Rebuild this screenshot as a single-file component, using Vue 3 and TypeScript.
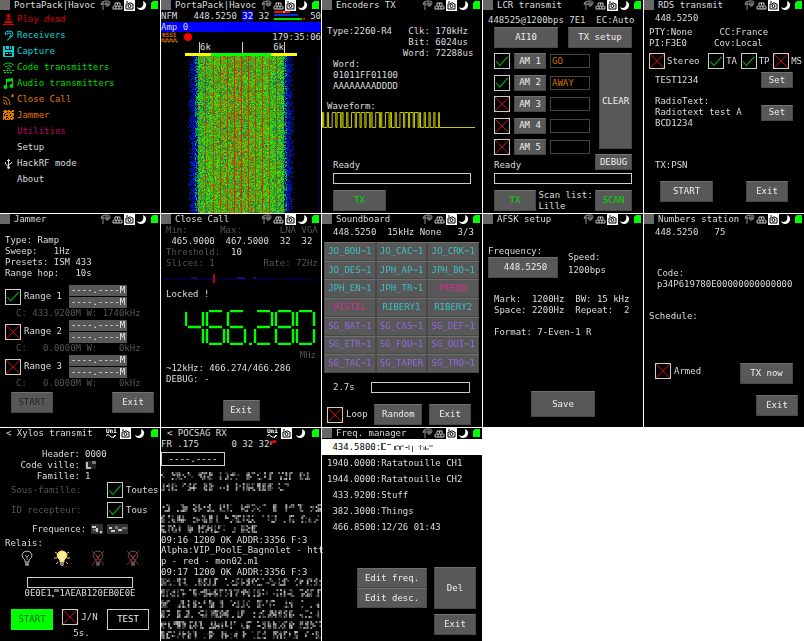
<script setup lang="ts">
import { onMounted, ref } from 'vue'

interface Screen {
  id: string
  title: string
  back?: boolean
}

interface MenuItem {
  label: string
  color: string
  icon: string
}

interface Block {
  x: number
  y: number
  fill: string
}

const screens: Screen[] = [
  { id: 'menu', title: 'PortaPack|Havoc' },
  { id: 'receiver', title: 'PortaPack|Havoc' },
  { id: 'encoders', title: 'Encoders TX' },
  { id: 'lcr', title: 'LCR transmit' },
  { id: 'rds', title: 'RDS transmit' },
  { id: 'jammer', title: 'Jammer' },
  { id: 'closecall', title: 'Close Call' },
  { id: 'soundboard', title: 'Soundboard' },
  { id: 'afsk', title: 'AFSK setup' },
  { id: 'numbers', title: 'Numbers station' },
  { id: 'xylos', title: 'Xylos transmit', back: true },
  { id: 'pocsag', title: 'POCSAG RX', back: true },
  { id: 'freqman', title: 'Freq. manager' },
]

const menu: MenuItem[] = [
  { label: 'Play dead', color: 'red', icon: 'joystick' },
  { label: 'Receivers', color: 'cyan', icon: 'ear' },
  { label: 'Capture', color: 'cyan', icon: 'floppy' },
  { label: 'Code transmitters', color: 'green', icon: 'remote' },
  { label: 'Audio transmitters', color: 'green', icon: 'note' },
  { label: 'Close Call', color: 'orange', icon: 'dish' },
  { label: 'Jammer', color: 'orange', icon: 'noise' },
  { label: 'Utilities', color: 'magenta', icon: '' },
  { label: 'Setup', color: 'white', icon: '' },
  { label: 'HackRF mode', color: 'white', icon: 'usb' },
  { label: 'About', color: 'white', icon: '' },
]

const messages = [
  { on: true, text: 'GO' },
  { on: true, text: 'AWAY' },
  { on: false, text: '' },
  { on: false, text: '' },
  { on: false, text: '' },
]

const flags = [
  { name: 'Stereo', on: false },
  { name: 'TA', on: true },
  { name: 'TP', on: true },
  { name: 'MS', on: false },
]

const ranges = [
  { on: true, info: 'C: 433.9200M W: 1740kHz' },
  { on: false, info: 'C:   0.0000M W:    0kHz' },
  { on: false, info: 'C:   0.0000M W:    0kHz' },
]

const sounds: [string, string][] = [
  ['JO_BOU~1', 'teal'], ['JO_CAC~1', 'teal'], ['JO_CRK~1', 'teal'],
  ['JO_DES~1', 'teal'], ['JPH_AP~1', 'teal'], ['JPH_BO~1', 'teal'],
  ['JPH_EN~1', 'teal'], ['JPH_TR~1', 'teal'], ['PERDU', 'pink'],
  ['PISTIL', 'pink'], ['RIBERY1', 'teal'], ['RIBERY2', 'teal'],
  ['SG_BAT~1', 'violet'], ['SG_CAS~1', 'violet'], ['SG_DEF~1', 'violet'],
  ['SG_ETR~1', 'violet'], ['SG_FOU~1', 'violet'], ['SG_OUI~1', 'violet'],
  ['SG_TAC~1', 'violet'], ['SG_TAPER', 'violet'], ['SG_TRO~1', 'violet'],
]

const relays = ['off', 'on', 'none', 'none']

const frequencies = [
  '1940.0000:Ratatouille CH1',
  '1944.0000:Ratatouille CH2',
  ' 433.9200:Stuff',
  ' 382.3000:Things',
  ' 466.8500:12/26 01:43',
]

function random(seed: number) {
  let s = seed
  return () => {
    s = (s * 1664525 + 1013904223) >>> 0
    return s / 4294967296
  }
}

/* Redacted text: each # of the mask becomes a cell of grey blocks. */
function mosaic(mask: string, seed: number): Block[] {
  const rnd = random(seed)
  const out: Block[] = []
  for (let c = 0; c < mask.length; c++) {
    if (mask[c] === ' ') continue
    for (let i = 0; i < 3; i++) {
      const tall = rnd() > 0.6
      for (let j = 0; j < 4; j++) {
        if (!tall && rnd() > 0.32) continue
        if (i === 2 && tall) continue
        const v = Math.round(40 + rnd() * 150)
        out.push({ x: c * 6 + i * 2, y: 1 + j * 2, fill: `rgb(${v},${v},${v})` })
      }
    }
  }
  return out
}

const log: { text?: string; mask?: string }[] = [
  { mask: '###### ### #### ##### ### ##' },
  { mask: '### ### ## ## ####### ##' },
  { mask: '' },
  { mask: '## ## #### ### ##### # #### ##' },
  { mask: '##### ##### ###### ### ## ####' },
  { mask: '#### # ##### # ###' },
  { text: '09:16 1200 OK ADDR:3356 F:3' },
  { text: 'Alpha:VIP_PoolE_Bagnolet - htt' },
  { text: 'p - red - mon02.m1' },
  { text: '09:17 1200 OK ADDR:3356 F:3' },
  { mask: '##### ##### ############ #####' },
  { mask: '#################### #### ####' },
  { mask: '## ####### # #### #### ## # ##' },
  { mask: '## ### ######### ######## ####' },
  { mask: '######## ##### ## ####### ####' },
  { mask: '####### ## ##### ### ##### ###' },
]

/* PT2260 symbols, eight time units each, then a sync pulse. */
function waveform(code: string): string {
  const symbols: Record<string, string> = { '0': '10001000', '1': '11101110', F: '10001110' }
  const bits = code.split('').map((c) => symbols[c]).join('') + '1'
  const u = 1.21
  let level = 0
  let d = 'M0 15.5'
  bits.split('').forEach((b, i) => {
    const v = Number(b)
    if (v !== level) {
      d += `H${(i * u + 0.5).toFixed(2)}V${v ? 0.5 : 15.5}`
      level = v
    }
  })
  return d + `H${(bits.length * u).toFixed(2)}V15.5H153`
}
const wave = waveform('01011FF01100')

const segmentsOf: Record<string, string> = { '4': 'bcfg', '6': 'acdefg', '2': 'abdeg', '8': 'abcdefg', '0': 'abcdef' }
const segmentPath: Record<string, string> = {
  a: 'M3 1H16', b: 'M18 2V16', c: 'M18 19V33', d: 'M3 34H16', e: 'M1 19V33', f: 'M1 2V16', g: 'M3 17H16',
}
const reading = '466280'.split('').map((ch, i) => ({
  x: i * 21 + (i > 2 ? 6 : 0),
  d: segmentsOf[ch].split('').map((s) => segmentPath[s]).join(' '),
}))

const noise = (() => {
  const rnd = random(7)
  const out: Block[] = []
  for (let y = 0; y < 10; y++) for (let x = 0; x < 11; x++) if (rnd() > 0.25) out.push({ x, y, fill: '' })
  return out
})()

const waterfall = ref<HTMLCanvasElement[]>([])

onMounted(() => {
  const canvas = waterfall.value[0]
  const ctx = canvas?.getContext('2d')
  if (!canvas || !ctx) return
  const w = canvas.width
  const h = canvas.height
  const img = ctx.createImageData(w, h)
  const rnd = random(42)
  const strong = [73, 80, 87, 101]
  const weak = [44, 52, 59, 66, 94, 108, 115]
  for (let y = 0; y < h; y++) {
    for (let x = 0; x < w; x++) {
      const n = rnd()
      const m = rnd()
      let c = [0, 0, 0]
      const d = x < 80 ? x - 28 : 131 - x
      if (d >= -2 && d < 9) {
        if (n < (d + 2) / 7) c = [0, m * 30, 90 + m * 160]
        if (d > 5 && m > 0.55) c = [0, 130 + n * 80, 60]
      } else if (d >= 9) {
        const heat = 0.14 + 0.36 * Math.max(0, 1 - Math.abs(x - 74) / 42)
        if (n < heat) c = [130 + m * 50, 90 + m * 50, 10]
        else if (n > (d < 20 ? 0.75 : 0.9)) c = [0, 110 + m * 60, 80 + m * 60]
        else c = [30 + m * 50, 175 + m * 60, 10]
        if (strong.includes(x) && m > 0.1) c = [225, 35, 10]
        else if (weak.includes(x) && m > 0.3) c = [170, 65, 10]
      } else if (x === 158) c = [0, 0, 70]
      const i = (y * w + x) * 4
      img.data[i] = c[0]
      img.data[i + 1] = c[1]
      img.data[i + 2] = c[2]
      img.data[i + 3] = 255
    }
  }
  ctx.putImageData(img, 0, 0)
})
</script>

<template>
  <main class="gallery">
    <section v-for="s in screens" :key="s.id" class="screen" :class="s.id">
      <header class="bar" :class="{ wide: s.back }">
        <span v-if="!s.back" class="square"></span>
        <h2>{{ s.back ? '< ' : '' }}{{ s.title }}</h2>
        <svg v-if="s.back" class="ico" viewBox="0 0 11 11">
          <text x="0" y="5" class="tiny">Uni</text>
          <path d="M0 8q2-3 4 0t5-1M7 10l3-3" fill="none" stroke="#fff" />
        </svg>
        <template v-else>
          <svg class="ico" viewBox="0 0 11 11">
            <path d="M1 5q0-4 4-4h3q2 0 2 2t-2 3H6M3 2v8M6 1v5M8 2v4M1 4h8" fill="none" stroke="#8c8c8c" />
          </svg>
          <svg class="ico" viewBox="0 0 11 11">
            <path d="M3 5V3h5v2M5.5 3v2M1 9V7q0-1 1-1h7q1 0 1 1v2zM4 6v3M7 6v3" fill="none" stroke="#ccc" />
          </svg>
        </template>
        <svg class="ico" viewBox="0 0 11 11">
          <path d="M0 0h11v11H0z" fill="#fff" />
          <path d="M2 4h2l1-1h2l1 1h1v5H2zM2 2h2" fill="none" stroke="#000" />
          <circle cx="5.500" cy="6" r="1.500" fill="none" stroke="#000" />
        </svg>
        <svg class="ico" viewBox="0 0 11 11">
          <path d="M7 1q4 2 3 5-1 4-5 4-3 0-4-3 3 2 5 0t1-6z" fill="#fff" />
        </svg>
        <svg class="ico" viewBox="0 0 11 11">
          <path d="M5 1h5v8H3V3z" fill="#0f0" />
        </svg>
      </header>

      <nav v-if="s.id === 'menu'" class="menu-list">
        <a v-for="m in menu" :key="m.label" href="#" :class="m.color">
          <svg viewBox="0 0 11 11">
            <g v-if="m.icon === 'joystick'" fill="currentColor">
              <circle cx="5.500" cy="2" r="2" /><path d="M5 3h1v3H5zM3 5h5v1H3zM2 7h7l1 2H1zM0 10h11v1H0z" />
            </g>
            <path v-else-if="m.icon === 'ear'" d="M2 5q0-4 4-4t4 3q0 2-2 3t-2 2-2 1M4 5q0-2 2-2t2 2-2 2" fill="none" stroke="currentColor" />
            <path v-else-if="m.icon === 'floppy'" d="M0 0h2v4h7V0h2v11H0zM3 0h3v3H3zM7 0h1v3H7zM2 6v4h7V6zM3 7h2v1H3zM6 7h2v1H6z" fill="currentColor" fill-rule="evenodd" />
            <g v-else-if="m.icon === 'remote'" fill="none" stroke="currentColor">
              <path d="M0 3q5-4 11 0M2 5q4-3 7 0M4 7q2-2 3 0" /><path d="M0 8.500h11M1 10.500h9" stroke-dasharray="2 1" />
            </g>
            <g v-else-if="m.icon === 'note'" fill="currentColor">
              <path d="M3 1l7-1v8H9V3L4 4v5H3z" /><circle cx="2.500" cy="9" r="2" /><circle cx="8.500" cy="8" r="2" />
            </g>
            <g v-else-if="m.icon === 'dish'" fill="none" stroke="currentColor">
              <path d="M0 3q7 0 7 8M0 6q4 0 4 5M0 8.500q2 0 2 2" /><path d="M8 2h3M9.500 0v3" />
            </g>
            <g v-else-if="m.icon === 'noise'" fill="currentColor">
              <rect v-for="(b, i) in noise" :key="i" :x="b.x" :y="b.y" width="1" height="1" />
            </g>
            <g v-else-if="m.icon === 'usb'" fill="none" stroke="currentColor">
              <path d="M5.500 1v8M2.500 4v2l3 2M8.500 4v1l-3 2M4 2.500h3" /><circle cx="5.500" cy="9.500" r="1" fill="currentColor" />
            </g>
          </svg>
          <span>{{ m.label }}</span>
        </a>
      </nav>

      <template v-else-if="s.id === 'receiver'">
        <div class="row tune">
          <pre>NFM   448.5250 <mark>32</mark> 32</pre>
          <svg class="meter" viewBox="0 0 32 10">
            <path d="M0 1h16" stroke="#f00" stroke-width="2" /><path d="M10 0v2" stroke="#fff" />
            <path d="M0 4h24" stroke="#03d" stroke-width="2" />
            <path d="M0 8h28" stroke="#0d0" stroke-width="2" /><path d="M29 8h2" stroke="#f00" stroke-width="2" />
          </svg>
          <p>50</p>
        </div>
        <p class="amp">Amp 0</p>
        <div class="row rec">
          <svg class="rssi" viewBox="0 0 18 11">
            <text x="1" y="5">RSSI</text>
            <path d="M1 10V7h2v3h2V7h2v3h2V7h2v3h2V7h2v3h2" fill="none" stroke="#d87000" />
          </svg>
          <span class="dot"></span>
          <p>179:35:06</p>
        </div>
        <div class="scale"><span>6k</span><span class="mid"></span><span>6k</span></div>
        <div class="band"></div>
        <canvas ref="waterfall" class="fall" width="160" height="157"></canvas>
      </template>

      <template v-else-if="s.id === 'encoders'">
        <pre class="one">Type:2260-R4   Clk: 170kHz
               Bit: 6024us
              Word: 72288us</pre>
        <pre class="two">Word:
01011FF01100
AAAAAAAADDDD</pre>
        <p class="one wave-label">Waveform:</p>
        <svg class="wave" viewBox="0 0 160 16"><path :d="wave" fill="none" stroke="#c8c800" /></svg>
        <p class="two ready">Ready</p>
        <progress class="gauge" value="0" max="1" aria-label="Transmission"></progress>
        <div class="row foot"><button class="w52 go">TX</button></div>
      </template>

      <template v-else-if="s.id === 'lcr'">
        <pre class="one">448525@1200bps 7E1  EC:Auto</pre>
        <div class="row top"><button class="w64">AI10</button><button class="w64">TX setup</button></div>
        <div class="row mid">
          <div class="left">
            <ul>
              <li v-for="(m, i) in messages" :key="i">
                <input type="checkbox" :checked="m.on" :aria-label="`Send AM ${i + 1}`" />
                <button>AM {{ i + 1 }}</button>
                <input type="text" :value="m.text" :aria-label="`AM ${i + 1} text`" />
              </li>
            </ul>
            <p>Ready</p>
          </div>
          <div class="right"><button>CLEAR</button><button>DEBUG</button></div>
        </div>
        <progress class="gauge" value="0" max="1" aria-label="Transmission"></progress>
        <div class="row foot">
          <button class="w42 go">TX</button>
          <pre>Scan list:
Lille</pre>
          <button class="w37 go">SCAN</button>
        </div>
      </template>

      <template v-else-if="s.id === 'rds'">
        <pre class="two first">448.5250</pre>
        <pre class="one pty">PTY:None     CC:France
PI:F3E0     Cov:Local</pre>
        <div class="flags">
          <label v-for="f in flags" :key="f.name"><input type="checkbox" :checked="f.on" />{{ f.name }}</label>
        </div>
        <div class="row psn"><p>TEST1234</p><button class="w32">Set</button></div>
        <div class="row text"><pre>RadioText:
Radiotext test A
BCD1234</pre><button class="w32">Set</button></div>
        <p class="two tx">TX:PSN</p>
        <div class="row foot"><button class="w52">START</button><button class="w42">Exit</button></div>
      </template>

      <template v-else-if="s.id === 'jammer'">
        <pre class="one">Type: Ramp
Sweep:   1Hz
Presets: ISM 433
Range hop:   10s</pre>
        <div class="ranges">
          <div v-for="(r, i) in ranges" :key="i" class="range">
            <label><input type="checkbox" :checked="r.on" />Range {{ i + 1 }}</label>
            <div class="pair"><button>----.----M</button><button>----.----M</button></div>
            <pre class="dim">{{ r.info }}</pre>
          </div>
        </div>
        <div class="row foot"><button class="w42 idle">START</button><button class="w42">Exit</button></div>
      </template>

      <template v-else-if="s.id === 'closecall'">
        <pre class="one"><span class="dim">Min:      Max:       LNA VGA</span>
 465.9000  467.5000  32  32
<span class="dim">Threshold:</span>  10
<span class="dim">Slices: 1         Rate: 72Hz</span></pre>
        <svg class="spectrum" viewBox="0 0 160 9">
          <path d="M4 5h150" stroke="#00a" stroke-dasharray="6 2 3 1 9 3 2 4" /><path d="M92 4h3M76 4h8M30 4h6" stroke="#22b" />
          <path d="M53 0v9" stroke="#b00" stroke-width="2" />
        </svg>
        <p class="one locked">Locked !</p>
        <svg class="digits" viewBox="0 0 131 35" role="img" aria-label="466.280">
          <path v-for="(g, i) in reading" :key="i" :d="g.d" :transform="`translate(${g.x} 0)`" />
          <path d="M64 34h3" />
        </svg>
        <p class="dim unit">MHz</p>
        <pre class="one">~12kHz: 466.274/466.286
DEBUG: -</pre>
        <div class="row foot"><button class="w37">Exit</button></div>
      </template>

      <template v-else-if="s.id === 'soundboard'">
        <pre class="two first">448.5250  15kHz None   3/3</pre>
        <div class="pads"><button v-for="p in sounds" :key="p[0]" :class="p[1]">{{ p[0] }}</button></div>
        <div class="row play"><p>2.7s</p><progress value="0" max="1" aria-label="Playback"></progress></div>
        <div class="row foot">
          <label><input type="checkbox" />Loop</label><button class="w48">Random</button><button class="w42">Exit</button>
        </div>
      </template>

      <template v-else-if="s.id === 'afsk'">
        <div class="row setup">
          <div><p>Frequency:</p><button>448.5250</button></div>
          <div class="speed"><p>Speed:</p><p>1200bps</p></div>
        </div>
        <pre class="two tones">Mark:  1200Hz  BW: 15 kHz
Space: 2200Hz  Repeat:  2

Format: 7-Even-1 R</pre>
        <div class="row foot"><button class="w64">Save</button></div>
      </template>

      <template v-else-if="s.id === 'numbers'">
        <pre class="two first">448.5250   75</pre>
        <pre class="code">Code:
p34P619780E00000000000000</pre>
        <p class="one schedule">Schedule:</p>
        <div class="row arm">
          <label><input type="checkbox" />Armed</label><button class="w52">TX now</button>
        </div>
        <div class="row foot"><button class="w42">Exit</button></div>
      </template>

      <template v-else-if="s.id === 'xylos'">
        <dl>
          <dt>Header:</dt><dd>0000</dd>
          <dt>Code ville:</dt>
          <dd><svg class="veil-l" viewBox="0 0 12 10"><path d="M0 1h11v8H0z" fill="#222" /><path d="M1 2h2v7H1zM3 7h3v2H3z" fill="#bbb" /><path d="M7 1h4v3H7z" fill="#777" /></svg></dd>
          <dt>Famille:</dt><dd>1</dd>
        </dl>
        <div class="row opt"><p class="dim">Sous-famille:</p><label><input type="checkbox" checked />Toutes</label></div>
        <div class="row opt"><p class="dim">ID recepteur:</p><label><input type="checkbox" checked />Tous</label></div>
        <div class="row freq">
          <p>Frequence:</p>
          <svg viewBox="0 0 37 10">
            <path d="M0 0h12v10H0zM16 0h21v10H16z" fill="#333" />
            <path d="M1 2h4v2H1zM5 4h2v4H5zM9 7h2v2H9zM18 3h3v2h-3zM20 6h4v2h-4zM27 5h4v2h-4z" fill="#ccc" />
            <path d="M2 5h3v2H2zM24 2h3v3h-3zM31 3h5v2h-5z" fill="#777" />
          </svg>
        </div>
        <p class="one">Relais:</p>
        <div class="row bulbs">
          <svg v-for="(r, i) in relays" :key="i" :class="r" viewBox="0 0 18 17">
            <path v-if="r === 'on'" d="M9 0v2M2 2l3 2M16 2l-3 2M1 8h3M14 8h3M3 14l2-2M15 14l-2-2" stroke="#fc3" fill="none" />
            <path class="glass" d="M7 12V10Q4 8 4 5 5 1 9 1t5 4q0 3-3 5v2z" />
            <path class="wire" d="M9 10V7L7 5M9 7l2-2" fill="none" />
            <path class="cap" d="M7 12h4v3l-1 1H8l-1-1z" />
            <path v-if="r === 'none'" d="M3 1l12 14M15 1L3 15" stroke="#a22" fill="none" />
          </svg>
        </div>
        <progress value="0" max="1" aria-label="Transmission"></progress>
        <div class="row frame">
          <p>0E0E1</p>
          <svg class="veil-s" viewBox="0 0 8 10"><path d="M0 7h2v2H0z" fill="#999" /><path d="M2 1h5v3H2z" fill="#777" /></svg>
          <p>1AEAB120EB0E0E</p>
        </div>
        <div class="row foot">
          <button class="w42 start">START</button>
          <div><label><input type="checkbox" />J/N</label><p>5s.</p></div>
          <button class="w42 test">TEST</button>
        </div>
      </template>

      <template v-else-if="s.id === 'pocsag'">
        <div class="row tune">
          <pre>FR .175      0 32 32</pre>
          <svg class="signal" viewBox="0 0 10 11"><path d="M2 2v4" stroke="#ccc" /><path d="M2 2l5-1v3H2z" fill="#f00" /></svg>
        </div>
        <button class="entry">----.----</button>
        <div class="log">
          <template v-for="(l, i) in log" :key="i">
            <p v-if="l.text">{{ l.text }}</p>
            <svg v-else viewBox="0 0 180 10" preserveAspectRatio="none">
              <rect v-for="(b, j) in mosaic(l.mask ?? '', i * 131 + 5)" :key="j" :x="b.x" :y="b.y" width="2" height="2" :fill="b.fill" />
            </svg>
          </template>
        </div>
      </template>

      <template v-else-if="s.id === 'freqman'">
        <ul class="list">
          <li class="active">
            <pre> 434.5800:</pre>
            <svg viewBox="0 0 54 10">
              <path d="M0 1h2v7H0zM2 1h3v1H2zM2 7h3v1H2zM6 2h4v1H6zM13 4h2v4h-2zM18 4h2v4h-2zM24 5h4v1h-4zM31 4h1v6h-1zM39 3h1v5h-1zM44 4h1v4h-1z" fill="#555" />
              <path d="M15 3h3v2h-3zM15 7h2v1h-2zM20 3h3v2h-3zM27 3h2v5h-2zM37 4h5v1h-5zM42 5h2v3h-2zM45 6h3v2h-3zM48 3h4v2h-4z" fill="#aaa" />
            </svg>
          </li>
          <li v-for="f in frequencies" :key="f"><p>{{ f }}</p></li>
        </ul>
        <div class="row edit">
          <div><button>Edit freq.</button><button>Edit desc.</button></div>
          <button class="w42">Del</button>
        </div>
        <div class="row foot"><button class="w42">Exit</button></div>
      </template>
    </section>
  </main>
</template>

<style>
body {
  margin: 0;
  background: #fff;
}
</style>

<style scoped>
.gallery {
  display: grid;
  grid-template-columns: repeat(5, 1fr);
  grid-template-rows: repeat(3, 1fr);
  gap: 1px;
  min-height: 100vh;
  font: 9px/11px 'DejaVu Sans Mono', 'Liberation Mono', monospace;
  color: #dcdcdc;
}
.screen {
  display: flex;
  flex-direction: column;
  min-width: 0;
  background: #000;
}
.screen * {
  box-sizing: border-box;
}
h2, p, pre, ul, dl, dd {
  margin: 0;
  padding: 0;
  font: inherit;
  white-space: pre;
}
ul {
  list-style: none;
}
svg {
  display: block;
  flex: none;
}
.row {
  display: flex;
}
.one {
  padding-left: 5px;
}
.two {
  padding-left: 11px;
}
.dim {
  color: #555;
}
.first {
  margin-top: 2px;
}

.bar {
  display: flex;
  gap: 1px;
  height: 11px;
  padding-right: 1px;
}
.bar.wide {
  gap: 3px;
  padding-left: 3px;
}
.square {
  width: 10px;
  height: 10px;
  background: #686868;
}
h2 {
  flex: 1;
  min-width: 0;
  padding-left: 3px;
}
.ico {
  width: 11px;
  height: 11px;
}
.tiny {
  font-size: 6px;
  font-weight: bold;
  fill: #fff;
}

button {
  height: 21px;
  padding: 0;
  border: 1px solid #484848;
  border-top-color: #707070;
  border-radius: 0;
  background: #585858;
  color: #eee;
  font: inherit;
  white-space: pre;
}
.w32 { width: 32px; }
.w37 { width: 37px; }
.w42 { width: 42px; }
.w48 { width: 48px; }
.w52 { width: 53px; }
.w64 { width: 64px; }
button.go { color: #00d800; }
button.idle { color: #222; }

label {
  display: flex;
  align-items: center;
  gap: 3px;
}
input[type='checkbox'] {
  flex: none;
  appearance: none;
  width: 16px;
  height: 16px;
  margin: 0;
  border: 1px solid #ccc;
  background:
    linear-gradient(to top right, transparent 47%, #c00 49% 51%, transparent 53%),
    linear-gradient(to bottom right, transparent 47%, #c00 49% 51%, transparent 53%),
    #000;
}
input[type='checkbox']:checked {
  background: #000;
}
input[type='checkbox']:checked::before {
  content: '';
  display: block;
  height: 100%;
  background: #0b0;
  clip-path: polygon(6% 56%, 12% 52%, 34% 76%, 88% 16%, 94% 22%, 34% 88%);
}
input[type='text'] {
  width: 40px;
  height: 14px;
  padding: 0 1px;
  border: 1px solid #444;
  background: #000;
  color: #d87000;
  font: inherit;
}
progress {
  appearance: none;
  display: block;
  height: 11px;
  border: 1px solid #ccc;
  background: #000;
}
progress::-webkit-progress-bar {
  background: #000;
}
.gauge {
  width: auto;
  margin: 2px 11px 6px;
}

.menu-list a {
  display: flex;
  align-items: center;
  gap: 3px;
  height: 16px;
  padding-left: 3px;
  text-decoration: none;
}
.menu-list svg {
  width: 11px;
  height: 11px;
}
.red { color: #d80000; }
.cyan { color: #00d8d8; }
.green { color: #00dc00; }
.orange { color: #e07800; }
.magenta { color: #c00068; }
.white { color: #dcdcdc; }

mark {
  background: #00f;
  color: #eee;
}
.receiver .tune {
  justify-content: space-between;
}
.meter {
  width: 32px;
  height: 10px;
}
.amp {
  height: 10px;
  background: #00f;
  line-height: 10px;
}
.rec {
  height: 10px;
  align-items: center;
  gap: 5px;
}
.rec p {
  margin-left: auto;
}
.rssi {
  width: 18px;
  height: 11px;
}
.rssi text {
  font-size: 6px;
  font-weight: bold;
  fill: #d87000;
}
.dot {
  width: 8px;
  height: 8px;
  border-radius: 50%;
  background: #f00;
}
.scale {
  display: grid;
  grid-template-columns: 1fr auto 1fr;
  margin: 0 36px 0 38px;
}
.scale span {
  border: 0 solid #ccc;
  border-left-width: 1px;
}
.scale span:last-child {
  border-width: 0 1px 0 0;
  text-align: right;
}
.band {
  height: 3px;
  margin: 0 24px;
  background: linear-gradient(90deg, #ff0 23%, #0f0 23% 77%, #ff0 77%);
}
.fall {
  display: block;
  flex: 1;
  width: 100%;
  min-height: 0;
}

.encoders .bar {
  margin-bottom: 15px;
}
.wave-label {
  margin-top: 9px;
}
.wave, .spectrum {
  width: 100%;
}
.ready {
  margin-top: 32px;
}
.encoders .foot, .lcr .foot {
  padding: 0 11px;
  justify-content: space-between;
}

.lcr .bar {
  margin-bottom: 4px;
}
.lcr .top {
  justify-content: space-between;
  padding: 1px 11px 5px;
}
.lcr .mid {
  justify-content: space-between;
  min-height: 118px;
  padding: 0 11px;
}
.left, .right {
  display: flex;
  flex-direction: column;
}
.left {
  gap: 5px;
}
.left ul {
  display: flex;
  flex: 1;
  flex-direction: column;
  justify-content: space-between;
}
.left li {
  display: flex;
  align-items: center;
  gap: 4px;
}
.left button {
  width: 32px;
  height: 16px;
}
.right {
  align-items: flex-end;
  gap: 5px;
  padding-bottom: 1px;
}
.right button {
  width: 37px;
  height: 16px;
}
.right button:first-child {
  flex: 1;
  width: 33px;
}

.pty {
  margin-top: 3px;
}
.flags {
  display: flex;
  justify-content: space-between;
  padding: 4px 2px 3px 5px;
}
.flags label {
  gap: 2px;
}
.flags label:first-child {
  margin-right: 5px;
}
.psn, .rds .text {
  align-items: center;
  justify-content: space-between;
  padding: 0 11px;
}
.rds .text {
  margin-top: 8px;
}
.w32 {
  height: 16px;
}
.tx {
  margin-top: 31px;
}
.rds .foot {
  justify-content: space-between;
  padding: 10px 16px 0;
}

.jammer .bar {
  margin-bottom: 10px;
}
.ranges {
  margin-top: 6px;
}
.range {
  display: grid;
  grid-template-columns: 64px 58px;
  padding-left: 5px;
}
.range label {
  align-items: center;
}
.pair {
  display: grid;
  gap: 1px;
}
.pair button {
  height: 11px;
  border-width: 0;
  line-height: 11px;
}
.range .dim {
  grid-column: span 2;
  height: 12px;
  padding-left: 11px;
}
.jammer .foot {
  justify-content: space-between;
  padding: 2px 6px 0 11px;
}

.spectrum {
  margin: 5px 0 6px;
}
.digits {
  width: 131px;
  height: 35px;
  margin: 10px 5px 5px auto;
  fill: none;
  stroke: #0f0;
  stroke-width: 2.4;
}
.unit {
  margin-bottom: 2px;
  padding-right: 5px;
  text-align: right;
}
.closecall .foot {
  justify-content: center;
  padding-top: 15px;
}

.pads {
  display: grid;
  grid-template-columns: repeat(3, 1fr);
  grid-auto-rows: 1fr;
  min-height: 131px;
  margin: 4px 3px 9px 2px;
}
.pads button {
  height: auto;
}
.pads .teal { color: #3cc0c0; }
.pads .pink { color: #e02c90; }
.pads .violet { color: #9468e4; }
.play {
  gap: 16px;
  padding: 0 12px 0 11px;
}
.play progress {
  flex: 1;
  width: 0;
}
.soundboard .foot {
  align-items: center;
  justify-content: space-between;
  padding: 11px 11px 0 5px;
}

.setup {
  gap: 10px;
  padding: 21px 5px 16px;
}
.setup button {
  display: block;
  width: 70px;
  padding-left: 5px;
}
.speed {
  display: grid;
  align-content: start;
  gap: 2px;
  padding-top: 6px;
}
.afsk .foot {
  justify-content: center;
  padding-top: 53px;
}
.afsk .foot button {
  height: 26px;
}

.code {
  margin: 30px 0 21px 13px;
}
.arm {
  align-items: flex-start;
  justify-content: space-between;
  padding: 41px 11px 11px;
}
.numbers .foot {
  justify-content: flex-end;
  padding-right: 6px;
}

dl {
  display: grid;
  grid-template-columns: 80px 1fr;
  column-gap: 5px;
  padding-top: 10px;
}
dt {
  text-align: right;
}
.veil-l {
  width: 12px;
  height: 10px;
}
.veil-s {
  width: 8px;
  height: 10px;
}
.opt {
  align-items: center;
  justify-content: space-between;
  padding-left: 11px;
  margin-bottom: 4px;
}
.opt label {
  width: 53px;
}
.freq {
  gap: 5px;
  margin: 2px 0 3px;
  padding-left: 32px;
}
.freq svg {
  width: 37px;
  height: 10px;
}
.bulbs {
  justify-content: space-between;
  padding: 1px 18px 0;
}
.bulbs svg {
  width: 18px;
  height: 17px;
}
.glass { fill: #000; stroke: #bbb; }
.cap { fill: #888; }
.wire { stroke: #999; }
.on .glass { fill: #fe8; stroke: #fd5; }
.on .wire { stroke: #fff; }
.none .glass { stroke: #555; }
.none .cap { fill: #555; }
.none .wire { stroke: #555; }
.xylos progress {
  width: auto;
  margin: 10px 27px 0;
}
.frame {
  justify-content: center;
}
.xylos .foot {
  justify-content: space-between;
  padding: 10px 11px 0;
}
.xylos .foot p {
  margin-top: 3px;
  padding-left: 11px;
}
button.start {
  border-color: #0f0;
  background: #0f0;
  color: #046004;
}
button.test {
  border-color: #ccc;
  background: #000;
}

/* Full-width log lines may reach just over the gap to the next screen. */
.pocsag {
  z-index: 1;
}
.signal {
  width: 10px;
  height: 11px;
}
.entry {
  width: 64px;
  height: 14px;
  margin: 2px 0 5px;
  border-color: #ccc;
  background: #000;
  line-height: 11px;
}
.log {
  display: grid;
  flex: 1;
  grid-auto-rows: 1fr;
  min-height: 0;
}
.log p {
  min-height: 0;
  line-height: 10px;
}
.log svg {
  width: 160px;
  height: 10px;
}

.list li {
  display: flex;
  align-items: center;
  height: 16px;
  padding-left: 5px;
}
.list .active {
  background: #fff;
  color: #000;
}
.list svg {
  width: 54px;
  height: 10px;
}
.edit {
  align-items: center;
  justify-content: flex-end;
  gap: 7px;
  padding: 32px 6px 5px;
}
.edit div {
  display: grid;
  width: 70px;
}
.edit div button {
  height: 20px;
}
.edit > button {
  height: 42px;
}
.freqman .foot {
  justify-content: flex-end;
  padding-right: 6px;
}
</style>
